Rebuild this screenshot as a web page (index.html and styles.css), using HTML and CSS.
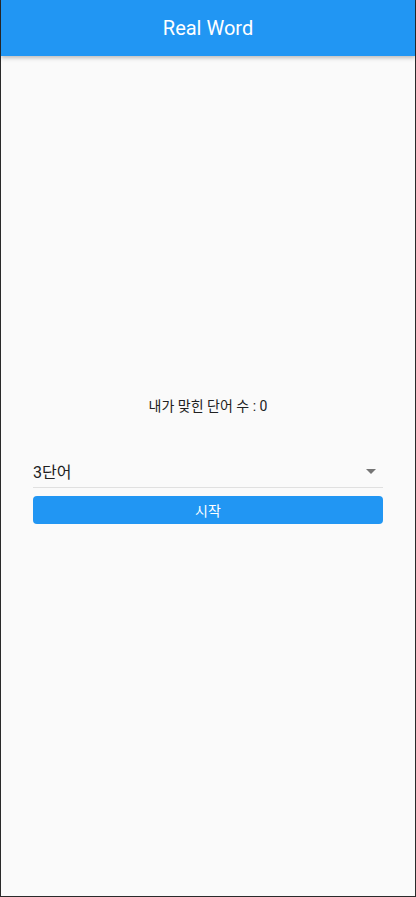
FILE: index.html
```html
<!DOCTYPE html>
<html lang="ko">
<head>
<meta charset="utf-8">
<link rel="stylesheet" href="styles.css">
</head>
<body>
<div class="frame">
  <header class="appbar"><h1 class="title">Real Word</h1></header>
  <main class="content">
    <p class="score">내가 맞힌 단어 수 : 0</p>
    <div class="dropdown">
      <span class="dd-value">3단어</span>
      <svg class="dd-arrow" width="24" height="24" viewBox="0 0 24 24"><path d="M7 10l5 5 5-5z" fill="#757575"/></svg>
    </div>
    <button class="start">시작</button>
  </main>
</div>
</body>
</html>
```
FILE: styles.css
```css
* { box-sizing: border-box; }
html, body { margin: 0; padding: 0; }
body {
  width: 416px;
  height: 897px;
  font-family: Roboto, "Noto Sans CJK KR", sans-serif;
  background: #fafafa;
}
.frame {
  width: 416px;
  height: 897px;
  border: 1px solid #2a2a2a;
  border-top: none;
  background: #fafafa;
  display: flex;
  flex-direction: column;
}
.appbar {
  height: 56px;
  background: #2196f3;
  display: flex;
  align-items: center;
  justify-content: center;
  box-shadow: 0 2px 4px rgba(0,0,0,0.25);
  position: relative;
  z-index: 1;
}
.title {
  margin: 0;
  font-size: 20px;
  font-weight: 400;
  color: #fff;
}
.content {
  padding: 340px 32px 0 32px;
  display: flex;
  flex-direction: column;
}
.score {
  margin: 0;
  text-align: center;
  font-size: 14px;
  line-height: 20px;
  color: #212121;
}
.dropdown {
  margin-top: 41px;
  height: 31px;
  border-bottom: 1px solid #e0e0e0;
  display: flex;
  align-items: center;
  justify-content: space-between;
  padding-bottom: 2px;
}
.dd-value {
  font-size: 16px;
  color: #212121;
}
.dd-arrow { margin-right: 0; }
.start {
  margin-top: 8px;
  height: 28px;
  border: none;
  border-radius: 4px;
  background: #2196f3;
  color: #fff;
  font-family: Roboto, "Noto Sans CJK KR", sans-serif;
  font-size: 14px;
  padding: 0;
}
```
